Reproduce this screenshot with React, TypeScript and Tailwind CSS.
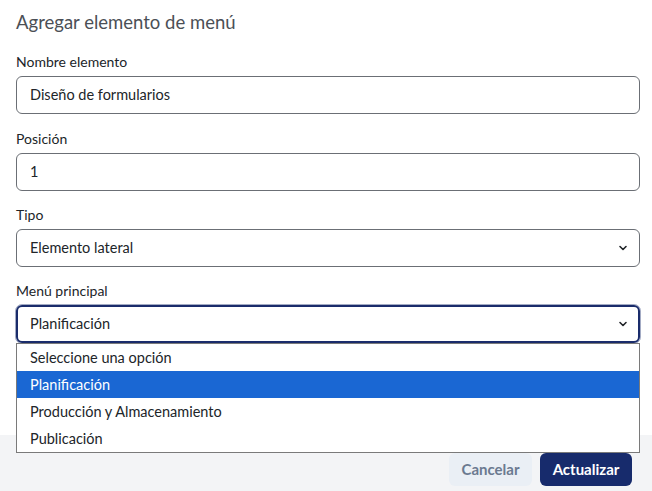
import React from "react";

const font = { fontFamily: "Lato, 'Noto Sans', sans-serif" };

const Chevron = () => (
  <svg width="10" height="10" viewBox="0 0 10 10" className="text-[#212529]">
    <path d="M2 3.5 L5 6.5 L8 3.5" fill="none" stroke="currentColor" strokeWidth="1.6" strokeLinecap="round" strokeLinejoin="round" />
  </svg>
);

const Field = ({ label, gap, children }: { label: string; gap: string; children: React.ReactNode }) => (
  <div className={gap}>
    <div className="h-5 leading-5 text-[14px] text-[#212529] mb-1">{label}</div>
    {children}
  </div>
);

const Input = ({ value }: { value: string }) => (
  <div className="h-[38px] rounded-md border border-[#6b6f75] px-[13px] flex items-center text-[14.5px] text-[#212529]">
    {value}
  </div>
);

const Select = ({ value, focused }: { value: string; focused?: boolean }) => (
  <div
    className={
      focused
        ? "h-[38px] rounded-md border-2 border-[#1a2c6b] outline outline-1 outline-[#1a2c6b]/40 pl-[12px] pr-[10px] flex items-center justify-between text-[14.5px] text-[#212529]"
        : "h-[38px] rounded-md border border-[#6b6f75] pl-[13px] pr-[11px] flex items-center justify-between text-[14.5px] text-[#212529]"
    }
  >
    <span>{value}</span>
    <Chevron />
  </div>
);

const options = ["Seleccione una opción", "Planificación", "Producción y Almacenamiento", "Publicación"];

export default function App() {
  return (
    <div className="w-[652px] h-[491px] bg-white flex flex-col" style={font}>
      <div className="pl-4 pr-3 pt-2 h-[435px]">
        <h2 className="h-7 leading-7 text-[18.5px] text-[#4b4f56] mb-4">Agregar elemento de menú</h2>
        <Field label="Nombre elemento" gap="mb-[15px]">
          <Input value="Diseño de formularios" />
        </Field>
        <Field label="Posición" gap="mb-[14px]">
          <Input value="1" />
        </Field>
        <Field label="Tipo" gap="mb-[14px]">
          <Select value="Elemento lateral" />
        </Field>
        <div className="h-5 leading-5 text-[14px] text-[#212529] mb-1">Menú principal</div>
        <div className="relative z-10">
          <Select value="Planificación" focused />
          <ul className="absolute left-0 right-0 top-full border border-[#7a7a7a] bg-white text-[14.5px] text-[#212529]">
            {options.map((o, i) => (
              <li
                key={o}
                className={
                  i === 1
                    ? "h-[27px] leading-[27px] pl-[13px] bg-[#1a67d3] text-white"
                    : "h-[27px] leading-[27px] pl-[13px]"
                }
              >
                {o}
              </li>
            ))}
          </ul>
        </div>
      </div>
      <div className="flex-1 bg-[#f3f4f6] flex justify-end items-start gap-2 pt-[18px] pr-5">
        <button className="h-[33px] w-[83px] rounded-md bg-[#eaeff5] text-[#6b7a90] font-bold text-[15px]">Cancelar</button>
        <button className="h-[33px] w-[92px] rounded-md bg-[#172b6c] text-white font-bold text-[15px]">Actualizar</button>
      </div>
    </div>
  );
}
